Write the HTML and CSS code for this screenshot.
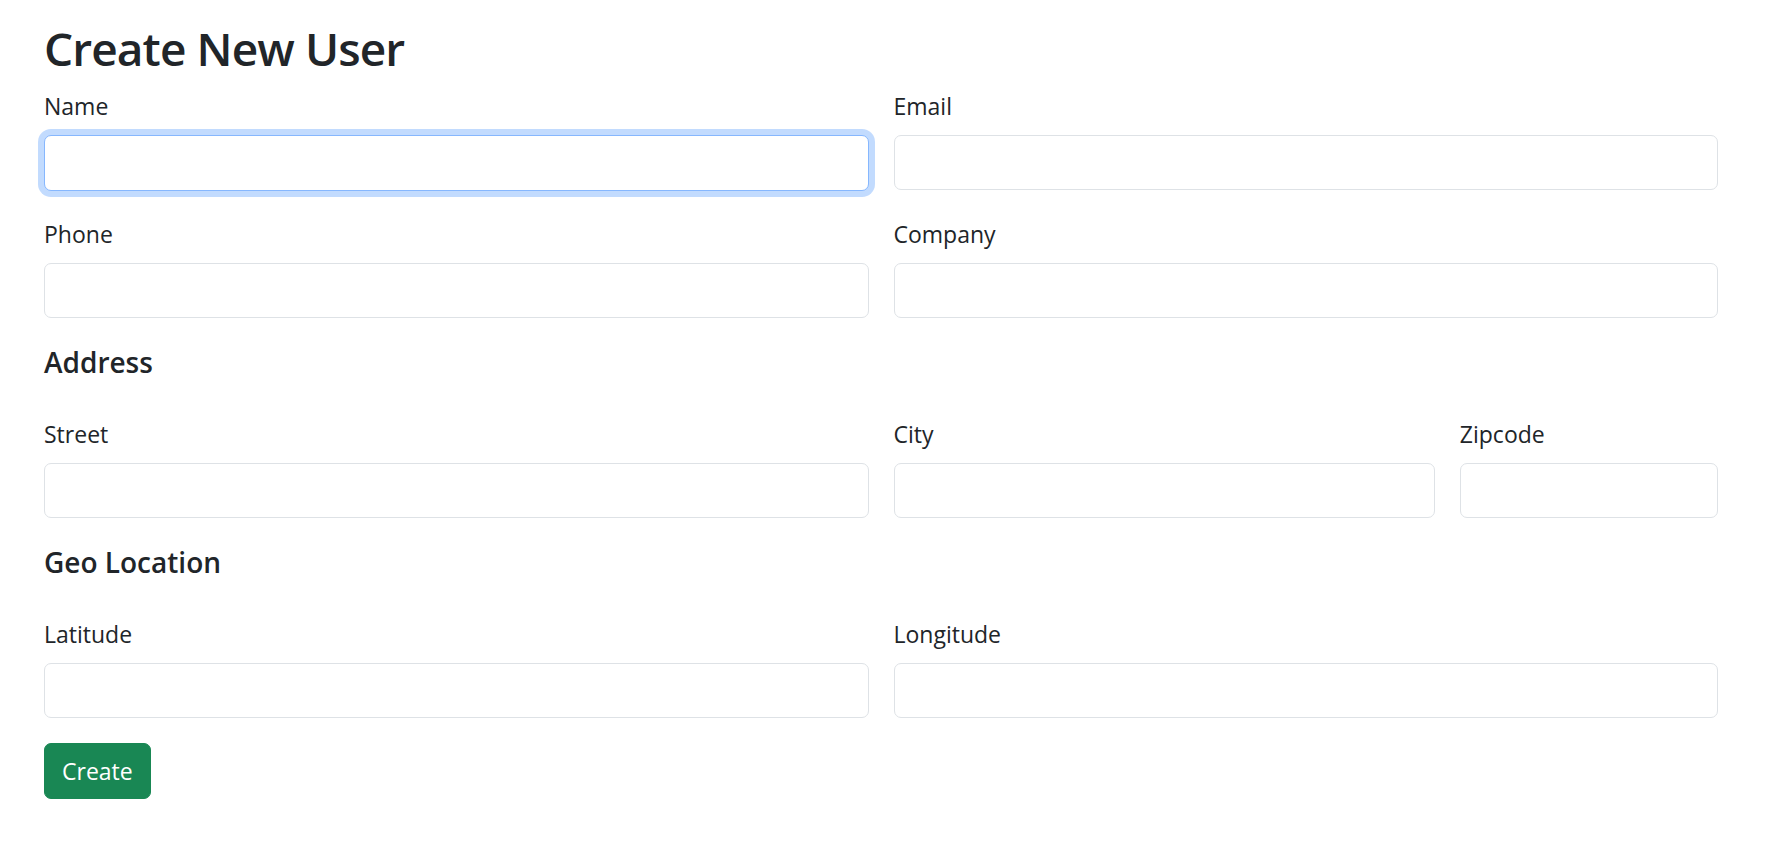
FILE: index.html
```html
<!DOCTYPE html>
<html lang="en">
<head>
<meta charset="utf-8">
<title>Create New User</title>
<link rel="stylesheet" href="styles.css">
</head>
<body>
<main class="page">
  <h1 class="title">Create New User</h1>
  <form class="user-form">
    <div class="form-row row-gap-after">
      <div class="field span-6">
        <label class="field-label" for="name">Name</label>
        <input class="field-input is-focused" id="name" type="text">
      </div>
      <div class="field span-6">
        <label class="field-label" for="email">Email</label>
        <input class="field-input" id="email" type="email">
      </div>
    </div>
    <div class="form-row section-gap-after">
      <div class="field span-6">
        <label class="field-label" for="phone">Phone</label>
        <input class="field-input" id="phone" type="text">
      </div>
      <div class="field span-6">
        <label class="field-label" for="company">Company</label>
        <input class="field-input" id="company" type="text">
      </div>
    </div>

    <h4 class="section-title">Address</h4>
    <div class="form-row section-gap-after">
      <div class="field span-6">
        <label class="field-label" for="street">Street</label>
        <input class="field-input" id="street" type="text">
      </div>
      <div class="field span-4">
        <label class="field-label" for="city">City</label>
        <input class="field-input" id="city" type="text">
      </div>
      <div class="field span-2">
        <label class="field-label" for="zipcode">Zipcode</label>
        <input class="field-input" id="zipcode" type="text">
      </div>
    </div>

    <h4 class="section-title">Geo Location</h4>
    <div class="form-row button-gap-after">
      <div class="field span-6">
        <label class="field-label" for="lat">Latitude</label>
        <input class="field-input" id="lat" type="text">
      </div>
      <div class="field span-6">
        <label class="field-label" for="lng">Longitude</label>
        <input class="field-input" id="lng" type="text">
      </div>
    </div>

    <button class="btn-create" type="submit">Create</button>
  </form>
</main>
</body>
</html>
```

FILE: styles.css
```css
* {
  box-sizing: border-box;
}

html, body {
  margin: 0;
  padding: 0;
  background: #ffffff;
}

body {
  font-family: "Open Sans", "Noto Sans", sans-serif;
  font-size: 23px;
  line-height: 34px;
  color: #212529;
}

.page {
  width: 1674px;
  margin-left: 44px;
  padding-top: 20px;
}

.title {
  margin: 0 0 13px 0;
  font-size: 46px;
  line-height: 56px;
  font-weight: 600;
  letter-spacing: -0.9px;
  color: #212529;
}

.user-form {
  display: flex;
  flex-direction: column;
  align-items: flex-start;
}

.form-row {
  width: 100%;
  display: grid;
  grid-template-columns: repeat(12, 1fr);
  column-gap: 25px;
}

.row-gap-after {
  margin-bottom: 26px;
}

.section-gap-after {
  margin-bottom: 27px;
}

.button-gap-after {
  margin-bottom: 25px;
}

.span-6 { grid-column: span 6; }
.span-4 { grid-column: span 4; }
.span-2 { grid-column: span 2; }

.field {
  display: flex;
  flex-direction: column;
}

.field-label {
  display: block;
  font-size: 23px;
  line-height: 34px;
  margin-bottom: 12px;
  color: #212529;
}

.field-input {
  display: block;
  width: 100%;
  height: 55px;
  margin: 0;
  padding: 8px 17px;
  font-family: inherit;
  font-size: 23px;
  color: #212529;
  background: #ffffff;
  border: 1px solid #dee2e6;
  border-radius: 7px;
  outline: none;
  appearance: none;
}

.field-input.is-focused {
  height: 56px;
  border-color: #86b7fe;
  box-shadow: 0 0 0 6px rgba(13, 110, 253, 0.25);
}

.section-title {
  margin: 0 0 38px 0;
  font-size: 28px;
  line-height: 34px;
  font-weight: 600;
  color: #212529;
}

.btn-create {
  display: inline-block;
  height: 56px;
  padding: 0 17px;
  font-family: inherit;
  font-size: 23px;
  line-height: 34px;
  color: #ffffff;
  background: #198754;
  border: 1px solid #198754;
  border-radius: 7px;
  cursor: pointer;
}
```
